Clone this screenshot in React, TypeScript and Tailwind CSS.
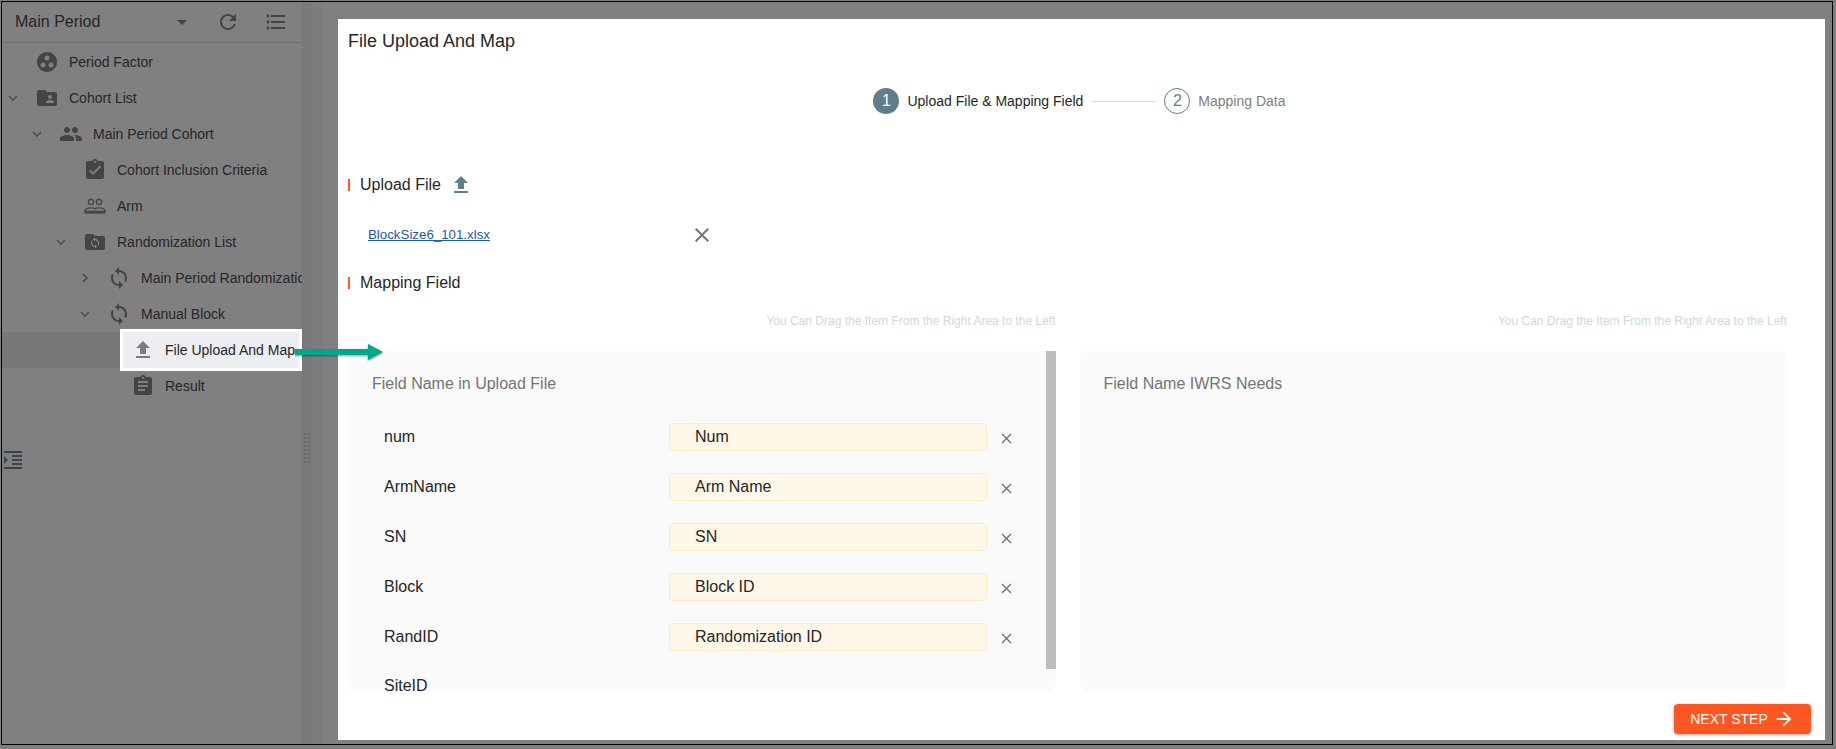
import React from "react";
import {
  MdGroupWork,
  MdFolderShared,
  MdPeople,
  MdAssignmentTurnedIn,
  MdAssignment,
  MdSync,
  MdFileUpload,
  MdRefresh,
  MdFormatListBulleted,
  MdFormatIndentIncrease,
  MdClose,
  MdArrowDropDown,
  MdKeyboardArrowDown,
  MdKeyboardArrowRight,
  MdArrowForward,
} from "react-icons/md";

function RandFolderIcon() {
  return (
    <svg viewBox="0 0 24 24" width={24} height={24} fill="currentColor">
      <path d="M20 6h-8l-2-2H4c-1.100 0-2 .9-2 2v12c0 1.100.9 2 2 2h16c1.100 0 2-.9 2-2V8c0-1.100-.9-2-2-2z" />
      <g transform="translate(12 13) scale(0.5) translate(-12 -12)">
        <path
          fill="#8e8e8e"
          d="M12 4V1L8 5l4 4V6c3.310 0 6 2.690 6 6 0 1.010-.25 1.970-.7 2.800l1.460 1.460C19.540 15.030 20 13.570 20 12c0-4.420-3.580-8-8-8zm0 14c-3.310 0-6-2.690-6-6 0-1.010.25-1.970.7-2.800L5.240 7.740C4.460 8.970 4 10.430 4 12c0 4.420 3.580 8 8 8v3l4-4-4-4v3z"
        />
      </g>
    </svg>
  );
}

function ArmIcon() {
  return (
    <svg viewBox="0 0 24 24" width={24} height={24} fill="none" stroke="currentColor" strokeWidth={1.3}>
      <circle cx={8} cy={8} r={2.6} />
      <circle cx={16} cy={8} r={2.6} />
      <path d="M1.700 17.500c0-2.300 3-3.700 6.300-3.700 1.600 0 3 .3 4 .9 1-.6 2.400-.9 4-.9 3.300 0 6.300 1.400 6.300 3.700z" />
      <path d="M1.700 18.800h20.600" strokeWidth={1.600} />
    </svg>
  );
}

type TreeRow = {
  level: number;
  label: string;
  chevron?: "down" | "right";
  icon: React.ReactNode;
  active?: boolean;
};

const tree: TreeRow[] = [
  { level: 0, label: "Period Factor", icon: <MdGroupWork size={24} /> },
  { level: 0, label: "Cohort List", chevron: "down", icon: <MdFolderShared size={24} /> },
  { level: 1, label: "Main Period Cohort", chevron: "down", icon: <MdPeople size={24} /> },
  { level: 2, label: "Cohort Inclusion Criteria", icon: <MdAssignmentTurnedIn size={24} /> },
  { level: 2, label: "Arm", icon: <ArmIcon /> },
  { level: 2, label: "Randomization List", chevron: "down", icon: <RandFolderIcon /> },
  { level: 3, label: "Main Period Randomization", chevron: "right", icon: <MdSync size={24} /> },
  { level: 3, label: "Manual Block", chevron: "down", icon: <MdSync size={24} /> },
  { level: 4, label: "File Upload And Map", icon: <MdFileUpload size={24} />, active: true },
  { level: 4, label: "Result", icon: <MdAssignment size={24} /> },
];

const paddings = ["pl-0", "pl-[24px]", "pl-[48px]", "pl-[72px]", "pl-[96px]"];

function Row({ row }: { row: TreeRow }) {
  if (row.active) {
    return (
      <div className="relative flex h-9 items-center bg-[#76787a]">
        {/* highlighted callout */}
        <div className="absolute left-[118px] top-[-3px] flex h-[42px] w-[182px] items-center overflow-hidden border-[3px] border-white bg-[#eceef1]">
          <span className="ml-[8px] flex w-6 shrink-0 items-center justify-center text-[#7c7c7c]">{row.icon}</span>
          <span className="ml-[10px] whitespace-nowrap text-[14px] text-[#262626]">{row.label}</span>
        </div>
      </div>
    );
  }
  return (
    <div className={`flex h-9 items-center ${paddings[row.level]}`}>
      <span className="flex w-[22px] shrink-0 items-center justify-center text-[#4a4a4a]">
        {row.chevron === "down" && <MdKeyboardArrowDown size={18} />}
        {row.chevron === "right" && <MdKeyboardArrowRight size={18} />}
      </span>
      <span className="ml-[11px] flex w-6 shrink-0 items-center justify-center text-[#444444]">{row.icon}</span>
      <span className="ml-[10px] whitespace-nowrap text-[14px] text-[#262626]">{row.label}</span>
    </div>
  );
}

function SectionTitle({ children }: { children: React.ReactNode }) {
  return (
    <div className="flex h-6 items-center text-[16px] text-[#262626]">
      <span className="h-3 w-[2px] bg-[#ff5722]" />
      <span className="ml-[10px]">{children}</span>
    </div>
  );
}

const mappings = [
  { name: "num", value: "Num" },
  { name: "ArmName", value: "Arm Name" },
  { name: "SN", value: "SN" },
  { name: "Block", value: "Block ID" },
  { name: "RandID", value: "Randomization ID" },
  { name: "SiteID", value: "" },
];

export default function App() {
  return (
    <div className="relative h-[749px] w-[1836px] overflow-hidden bg-[#808080] pl-px pt-px font-['Liberation_Sans',Arial,sans-serif]">
      <div className="flex h-[744px] w-[1832px] border border-black">
        {/* Sidebar */}
        <aside className="flex w-[300px] shrink-0 flex-col overflow-hidden">
          <div className="flex h-[41px] shrink-0 items-center border-b border-[#6f6f6f] pl-[13px]">
            <span className="w-[155px] text-[16px] text-[#262626]">Main Period</span>
            <MdArrowDropDown size={24} className="text-[#444444]" />
            <MdRefresh size={24} className="ml-[22px] text-[#444444]" />
            <MdFormatListBulleted size={24} className="ml-[24px] text-[#444444]" />
          </div>
          <div className="pt-[1px]">
            {tree.map((r) => (
              <Row key={r.label} row={r} />
            ))}
          </div>
          <div className="mt-[44px] text-[#37474f]">
            <MdFormatIndentIncrease size={24} className="-ml-[1px]" />
          </div>
        </aside>

        {/* Drag gutter */}
        <div className="flex w-[10px] shrink-0 items-center justify-center bg-[#797979] pt-[150px]">
          <div className="grid grid-cols-2 gap-[2px]">
            {Array.from({ length: 16 }).map((_, i) => (
              <span key={i} className="h-[2px] w-[2px] bg-[#6a6a6a]" />
            ))}
          </div>
        </div>
        <div className="w-[11px] shrink-0 bg-[#7c7c7c]" />
        <div className="w-[15px] shrink-0" />

        {/* Modal */}
        <main className="mb-[4px] mr-[7px] mt-[17px] flex flex-1 flex-col bg-white pl-[10px] pr-[38px]">
          <div className="flex h-[44px] shrink-0 items-center text-[18px] text-[#262626]">File Upload And Map</div>

          <div className="ml-6 mt-[25px] flex h-[26px] items-center justify-center text-[14px]">
            <span className="flex h-[26px] w-[26px] items-center justify-center rounded-full bg-[#607d8b] text-[16px] text-white">1</span>
            <span className="ml-2 text-[#262626]">Upload File &amp; Mapping Field</span>
            <span className="mx-2 h-px w-[65px] bg-[#e0e0e0]" />
            <span className="flex h-[26px] w-[26px] items-center justify-center rounded-full border border-[#607d8b] text-[16px] text-[#607d8b]">2</span>
            <span className="ml-2 text-[#808080]">Mapping Data</span>
          </div>

          <div className="mt-[59px]">
            <SectionTitle>
              <span className="flex items-center">
                Upload File
                <MdFileUpload size={24} className="ml-[8px] text-[#607d8b]" />
              </span>
            </SectionTitle>
          </div>

          <div className="mt-[23px] flex h-[30px] items-center pl-5">
            <a className="w-[322px] text-[13.3px] text-[#1f5aa8] underline">BlockSize6_101.xlsx</a>
            <MdClose size={24} className="text-[#757575]" />
          </div>

          <div className="mt-[21px]">
            <SectionTitle>Mapping Field</SectionTitle>
          </div>

          <div className="mt-[17px] grid h-4 grid-cols-2 gap-6 text-right text-[12px] text-[#cfd8dc]">
            <span>You Can Drag the Item From the Right Area to the Left</span>
            <span>You Can Drag the Item From the Right Area to the Left</span>
          </div>

          <div className="mt-[23px] grid grid-cols-2 grid-rows-[340px] gap-6">
            <div className="relative min-h-0">
              <div className="h-[340px] overflow-hidden rounded-lg bg-[#fafafa] pt-[23px]">
                <div className="h-5 pl-6 text-[16px] leading-5 text-[#757575]">Field Name in Upload File</div>
                <div className="mt-[18px]">
                  {mappings.map((m) => (
                    <div key={m.name} className={`flex items-center pl-9 text-[16px] text-[#262626] ${m.value ? "h-[50px]" : "h-[48px]"}`}>
                      <span className="w-[285px]">{m.name}</span>
                      {m.value && (
                        <>
                          <span className="flex h-7 w-[318px] items-center rounded-sm border border-[#ffe9c0] bg-[#fff8e9] pl-[25px]">{m.value}</span>
                          <MdClose size={17} className="ml-[11px] mt-[2px] text-[#757575]" />
                        </>
                      )}
                    </div>
                  ))}
                </div>
              </div>
              {/* scrollbar thumb */}
              <div className="absolute right-0 top-0 h-[318px] w-[10px] bg-[#bdbdbd]" />
            </div>
            <div className="rounded-lg bg-[#fafafa] pt-[23px]">
              <div className="h-5 pl-6 text-[16px] leading-5 text-[#757575]">Field Name IWRS Needs</div>
            </div>
          </div>

          <div className="mt-[13px] flex justify-end">
            <button className="-mr-6 flex h-[30px] w-[137px] items-center justify-center gap-[5px] rounded-sm bg-[#ff5722] text-[14px] text-white shadow-[0_1px_3px_rgba(0,0,0,0.35)]">
              NEXT STEP
              <MdArrowForward size={22} />
            </button>
          </div>
        </main>
      </div>

      {/* Annotation arrow */}
      <svg viewBox="0 0 88 16" width={88} height={16} className="absolute left-[295px] top-[344px] drop-shadow-[0_1px_1px_rgba(0,0,0,0.4)]">
        <path d="M0 5h73V0l15 8-15 8v-5H0z" fill="#00a88a" />
      </svg>
    </div>
  );
}
